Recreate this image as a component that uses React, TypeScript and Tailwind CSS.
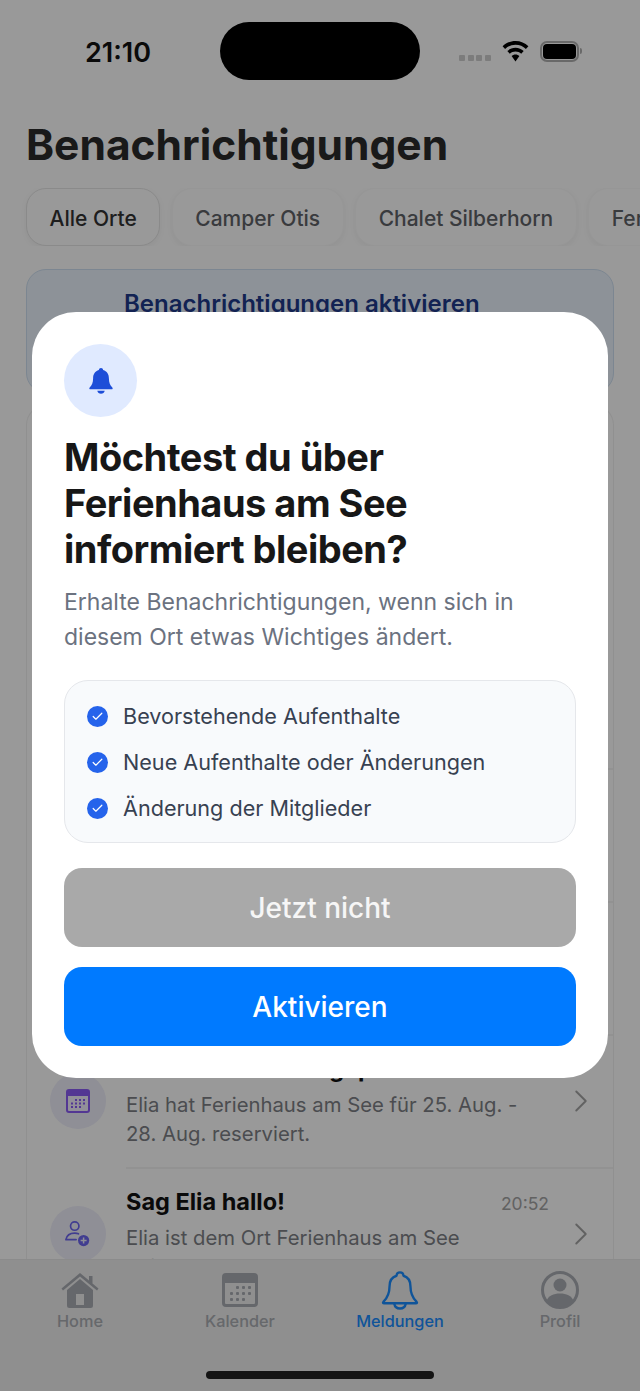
import type { ReactNode } from 'react';
import { Check, ChevronRight } from 'lucide-react';

const CHIPS = [
  { label: 'Alle Orte', active: true },
  { label: 'Camper Otis', active: false },
  { label: 'Chalet Silberhorn', active: false },
  { label: 'Ferienhaus am See', active: false },
];

const BENEFITS = ['Bevorstehende Aufenthalte', 'Neue Aufenthalte oder Änderungen', 'Änderung der Mitglieder'];

const BOOKING = {
  title: 'Neuer Aufenthalt geplant',
  time: '20:53',
  lines: ['Elia hat Ferienhaus am See für 25. Aug. -', '28. Aug. reserviert.'],
};

function WifiIcon() {
  return (
    <svg width="27" height="21" viewBox="0 0 27 21" fill="#000">
      <path d="M13.5 0C8.4 0 3.9 2 .6 5.2l2.5 2.7C5.8 5.300 9.400 3.700 13.500 3.700s7.700 1.600 10.400 4.200l2.500-2.700C23.100 2 18.600 0 13.500 0Z" />
      <path d="M13.500 6.800c-3.200 0-6.100 1.300-8.200 3.300l2.500 2.700c1.500-1.400 3.500-2.300 5.700-2.300s4.200.9 5.700 2.300l2.500-2.700c-2.100-2-5-3.300-8.200-3.300Z" />
      <path d="M13.500 13.600c-1.500 0-2.900.6-3.900 1.500l3.900 5.300 3.900-5.300c-1-.9-2.400-1.500-3.900-1.500Z" />
    </svg>
  );
}

function StatusBar() {
  return (
    <div className="flex h-[102px] shrink-0 items-center">
      <div className="w-[220px] pl-[85px] pt-[2px] text-[27px] font-semibold leading-none text-[#111]">21:10</div>
      <div className="h-[58px] w-[200px] rounded-[29px] bg-black" />
      <div className="ml-[39px] flex items-center">
        <div className="mt-[14px] flex gap-[2.500px]">
          <span className="h-[6px] w-[6px] rounded-[1px] bg-[#cfcfcf]" />
          <span className="h-[6px] w-[6px] rounded-[1px] bg-[#cfcfcf]" />
          <span className="h-[6px] w-[6px] rounded-[1px] bg-[#cfcfcf]" />
          <span className="h-[6px] w-[6px] rounded-[1px] bg-[#cfcfcf]" />
        </div>
        <div className="ml-[11px]">
          <WifiIcon />
        </div>
        <div className="ml-[11px] flex h-[21px] w-[39px] items-center justify-center rounded-[7px] border-2 border-[#b0b0b0]">
          <div className="h-[15px] w-[33px] rounded-[4px] bg-black" />
        </div>
        <div className="ml-[1px] h-[6px] w-[2px] rounded-r-full bg-[#b0b0b0]" />
      </div>
    </div>
  );
}

function Chips() {
  return (
    <div className="mt-[13px] flex h-[58px] shrink-0 gap-[11.500px] overflow-hidden pl-[26px]">
      {CHIPS.map((chip) => (
        <div
          key={chip.label}
          className={`flex shrink-0 items-center justify-center rounded-[20px] px-[22.500px] pt-[3px] text-[21px] font-medium shadow-[0_2px_6px_rgba(0,0,0,0.05)] ${
            chip.active ? 'border border-[#e6e6e6] bg-white text-[#333333]' : 'border border-[#fafafa] bg-white text-[#5f6368]'
          }`}
        >
          {chip.label}
        </div>
      ))}
    </div>
  );
}

function CalendarGlyph() {
  const rows = [
    [9, 13, 17],
    [5, 9, 13, 17],
    [5, 9, 13],
  ];
  return (
    <svg width="24" height="24" viewBox="0 0 24 24">
      <rect x="1" y="1" width="22" height="22" rx="2" fill="#f3f0ff" stroke="#8b5cf6" strokeWidth="2" />
      <path d="M1 3a2 2 0 0 1 2-2h18a2 2 0 0 1 2 2v4H1Z" fill="#8b5cf6" />
      {rows.map((xs, r) => xs.map((x) => <rect key={`${r}-${x}`} x={x} y={10 + r * 3.500} width="2" height="2" fill="#8b5cf6" />))}
    </svg>
  );
}

function PersonPlusGlyph() {
  return (
    <svg width="28" height="28" viewBox="0 0 30 30" fill="none" stroke="#6d66f0" strokeWidth="1.800">
      <circle cx="11.500" cy="6.500" r="4.500" />
      <path d="M2 21c1-5 5-7 9.500-7 1.500 0 3 .3 4 .8M2 21h11" strokeLinecap="round" />
      <circle cx="21" cy="22" r="6" fill="#6d66f0" stroke="none" />
      <path d="M21 18.800v6.400M17.800 22h6.400" stroke="#eeeefb" strokeWidth="1.600" />
    </svg>
  );
}

function NoticeRow({ title, time, lines, icon, divider }: { title: string; time: string; lines: string[]; icon: ReactNode; divider?: boolean }) {
  return (
    <div className="flex h-[133px] shrink-0 pl-[23px]">
      <div className="flex w-[76px] shrink-0 items-center">
        <div className="flex h-[56px] w-[56px] items-center justify-center rounded-full bg-[#eeeefb]">{icon}</div>
      </div>
      <div className={`relative flex-1 pt-[19px] ${divider ? 'border-t-2 border-[#f3f3f3]' : ''}`}>
        <div className="flex h-[28px] items-center justify-between pr-[64px]">
          <span className="text-[23.500px] font-bold text-[#111]">{title}</span>
          <span className="pt-[4px] text-[17.500px] text-[#a3a3a3]">{time}</span>
        </div>
        <div className="mt-[7px] pr-[50px] text-[20.300px] leading-[29px] text-[#7d7f85]">
          {lines.map((line) => (
            <div key={line}>{line}</div>
          ))}
        </div>
        <ChevronRight className="absolute right-[13px] top-[46px] text-[#a3a3a3]" size={38} strokeWidth={1.200} />
      </div>
    </div>
  );
}

function Feed() {
  return (
    <div className="min-h-0 flex-1 overflow-hidden px-[26px] pt-[23px]">
      <div className="h-[124px] rounded-[20px] border border-[#cfe0f2] bg-[#ebf4fd] pl-[97px] pt-[18px] text-[24px] font-semibold leading-[32px] text-[#1e3a8a]">
        Benachrichtigungen aktivieren
      </div>
      <div className="mt-[12px] flex flex-col rounded-t-[20px] border-x border-t border-[#f1f1f1] pt-[229px]">
        <NoticeRow {...BOOKING} icon={<CalendarGlyph />} />
        <NoticeRow {...BOOKING} icon={<CalendarGlyph />} divider />
        <NoticeRow {...BOOKING} icon={<CalendarGlyph />} divider />
        <NoticeRow {...BOOKING} icon={<CalendarGlyph />} divider />
        <NoticeRow
          title="Sag Elia hallo!"
          time="20:52"
          lines={['Elia ist dem Ort Ferienhaus am See', 'beigetreten.']}
          divider
          icon={<PersonPlusGlyph />}
        />
      </div>
    </div>
  );
}

function TabItem({ label, active, children }: { label: string; active?: boolean; children: ReactNode }) {
  return (
    <div className="flex flex-col items-center">
      <div className="flex h-[40px] items-center justify-center">{children}</div>
      <span className={`mt-[2px] text-[16.300px] font-medium leading-[18px] ${active ? 'text-[#1a8cff]' : 'text-[#aaadb3]'}`}>{label}</span>
    </div>
  );
}

function TabBar() {
  return (
    <div className="relative z-10 h-[132px] shrink-0 border-t border-[#e8e8e8] bg-[#eeeeee]">
      <div className="grid grid-cols-4 pt-[10px]">
        <TabItem label="Home">
          <svg width="38" height="35" viewBox="0 0 38 35" fill="#a9acb3">
            <path d="M19 0 .5 15.500l1.500 2L19 3.500l17 14 1.500-2-6-5V3h-3.500v4.500Z" />
            <path d="M19 6 6 17v15.500A2.500 2.500 0 0 0 8.500 35h21a2.500 2.500 0 0 0 2.500-2.500V17ZM15 21h8v11h-8Z" fillRule="evenodd" />
          </svg>
        </TabItem>
        <TabItem label="Kalender">
          <svg width="36" height="34" viewBox="0 0 36 34" fill="#a9acb3">
            <path
              fillRule="evenodd"
              d="M4 0h28a4 4 0 0 1 4 4v26a4 4 0 0 1-4 4H4a4 4 0 0 1-4-4V4a4 4 0 0 1 4-4Zm-1 10v20a1 1 0 0 0 1 1h28a1 1 0 0 0 1-1V10Z"
            />
            {[[14, 13], [20, 13], [26, 13], [8, 19], [14, 19], [20, 19], [26, 19], [8, 25], [14, 25], [20, 25]].map(([x, y]) => (
              <rect key={`${x}-${y}`} x={x} y={y} width="3" height="3" rx="1" />
            ))}
          </svg>
        </TabItem>
        <TabItem label="Meldungen" active>
          <svg width="38" height="40" viewBox="0 0 40 40" fill="none" stroke="#1a8cff" strokeWidth="2.500" strokeLinejoin="round">
            <path d="M20 1.500c-2 0-3.500 1.500-3.700 3.500C10.800 6.800 9 11 9 16c0 8-2 12-6.500 16.500-.8 1-.3 1.500.7 1.500h33.600c1 0 1.500-.5.700-1.500C33 28 31 24 31 16c0-5-1.800-9.200-7.300-11-.2-2-1.700-3.500-3.700-3.500Z" />
            <path d="M14 34.500c.5 3 3 5 6 5s5.500-2 6-5" />
          </svg>
        </TabItem>
        <TabItem label="Profil">
          <svg width="40" height="40" viewBox="0 0 40 40">
            <circle cx="20" cy="20" r="17.500" fill="none" stroke="#a9acb3" strokeWidth="3" />
            <circle cx="20" cy="15" r="6.500" fill="#a9acb3" />
            <path d="M6.500 31c2-5.500 7-7.500 13.500-7.500s11.500 2 13.500 7.500c-3.500 4-8 6-13.500 6s-10-2-13.500-6Z" fill="#a9acb3" />
          </svg>
        </TabItem>
      </div>
      <div className="absolute bottom-[12px] left-[206px] h-[8px] w-[228px] rounded-full bg-[#222]" />
    </div>
  );
}

function PermissionDialog() {
  return (
    <div className="absolute inset-0 z-20 bg-black/40">
      <div className="mx-[32px] mt-[312px] h-[766px] rounded-[44px] bg-white px-[32px] pt-[32px]">
        <div className="flex h-[73px] w-[73px] items-center justify-center rounded-full bg-[#e0eaff]">
          <svg width="26" height="28" viewBox="0 0 28 30" fill="#1d4ed8">
            <path d="M14 1c-1.300 0-2.200 1-2.300 2.200C7.600 4.400 5.500 7.700 5.500 12c0 5-1.300 7.500-3.700 10-.8.900-.4 2 .9 2h22.600c1.300 0 1.700-1.100.9-2-2.400-2.500-3.700-5-3.700-10 0-4.300-2.100-7.600-6.200-8.800C16.200 2 15.300 1 14 1Z" />
            <path d="M10 25.500h8c-.4 1.900-2 3.200-4 3.200s-3.600-1.300-4-3.200Z" />
          </svg>
        </div>
        <h2 className="mt-[17px] text-[38px] font-bold leading-[46px] tracking-[-0.5px] text-[#171717]">
          Möchtest du über
          <br />
          Ferienhaus am See
          <br />
          informiert bleiben?
        </h2>
        <p className="mt-[13px] text-[23px] leading-[35px] text-[#6b7280]">
          Erhalte Benachrichtigungen, wenn sich in
          <br />
          diesem Ort etwas Wichtiges ändert.
        </p>
        <div className="mt-[25px] flex h-[163px] flex-col justify-center gap-[21px] rounded-[24px] border border-[#e5e7eb] bg-[#f8fafc] pl-[22px] pt-[2px]">
          {BENEFITS.map((text) => (
            <div key={text} className="flex h-[25px] items-center gap-[15px] text-[21.600px] text-[#374151]">
              <span className="flex h-[21px] w-[21px] shrink-0 items-center justify-center rounded-full bg-[#2563eb]">
                <Check className="text-white" size={13} strokeWidth={2.200} />
              </span>
              {text}
            </div>
          ))}
        </div>
        <button type="button" className="mt-[25px] flex h-[79px] w-full items-center justify-center rounded-[18px] bg-[#a9a9a9] text-[28px] font-medium text-white/90">
          Jetzt nicht
        </button>
        <button type="button" className="mt-[20px] flex h-[79px] w-full items-center justify-center rounded-[18px] bg-[#007aff] text-[28px] font-medium text-white">
          Aktivieren
        </button>
      </div>
    </div>
  );
}

export default function App() {
  return (
    <div className="relative flex h-[1391px] w-[640px] flex-col overflow-hidden bg-white font-['Inter',sans-serif]">
      <StatusBar />
      <h1 className="mt-[13px] pl-[26px] text-[42.500px] font-bold leading-[60px] text-[#2a2a2a]">Benachrichtigungen</h1>
      <Chips />
      <Feed />
      <TabBar />
      <PermissionDialog />
    </div>
  );
}
